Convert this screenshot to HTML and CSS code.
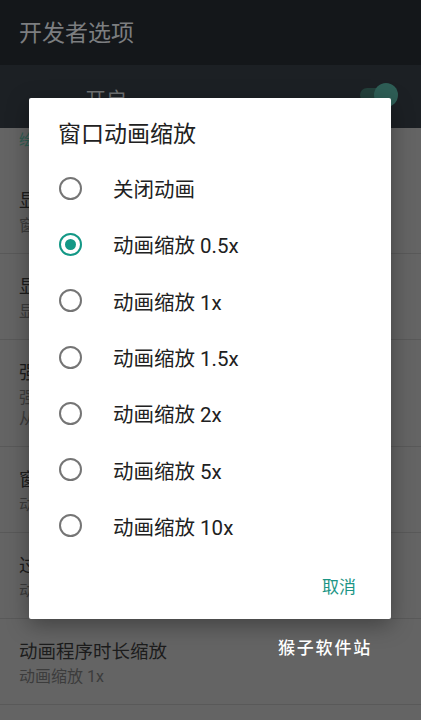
FILE: index.html
```html
<!DOCTYPE html>
<html lang="zh-CN">
<head>
  <meta charset="UTF-8" />
  <meta name="viewport" content="width=device-width, initial-scale=1.0" />
  <title>开发者选项</title>
  <link rel="stylesheet" href="styles.css">
</head>
<body>
  <div class="screen">
    <div class="appbar">开发者选项</div>
    <div class="switchbar">
      <span class="switch-label">开启</span>
      <span class="toggle"><span class="thumb"></span></span>
    </div>
    <div class="list">
      <div class="section">绘图</div>
      <div class="item">
        <div class="item-title">显示表面更新</div>
        <div class="item-sub">窗口中的所有表面更新时全部闪烁</div>
      </div>
      <div class="item">
        <div class="item-title">显示布局边界</div>
        <div class="item-sub">显示剪辑边界、边距等。</div>
      </div>
      <div class="item">
        <div class="item-title">强制使用从右到左的布局方向</div>
        <div class="item-sub">强制将所有语言区域的屏幕布局方向改为<br>从右到左</div>
      </div>
      <div class="item">
        <div class="item-title">窗口动画缩放</div>
        <div class="item-sub">动画缩放 0.5x</div>
      </div>
      <div class="item">
        <div class="item-title">过渡动画缩放</div>
        <div class="item-sub">动画缩放 1x</div>
      </div>
      <div class="item">
        <div class="item-title">动画程序时长缩放</div>
        <div class="item-sub">动画缩放 1x</div>
      </div>
    </div>

    <div class="dialog">
      <div class="dialog-title">窗口动画缩放</div>
      <div class="options">
        <div class="option"><span class="radio"></span>关闭动画</div>
        <div class="option"><span class="radio checked"></span>动画缩放 0.5x</div>
        <div class="option"><span class="radio"></span>动画缩放 1x</div>
        <div class="option"><span class="radio"></span>动画缩放 1.5x</div>
        <div class="option"><span class="radio"></span>动画缩放 2x</div>
        <div class="option"><span class="radio"></span>动画缩放 5x</div>
        <div class="option"><span class="radio"></span>动画缩放 10x</div>
      </div>
      <div class="actions"><span class="btn">取消</span></div>
    </div>

    <div class="watermark">猴子软件站</div>
  </div>
</body>
</html>
```

FILE: styles.css
```css
body {
  margin: 0;
  font-family: Roboto, "Noto Sans CJK SC", sans-serif;
  background: #646464;
}
.screen {
  position: relative;
  width: 421px;
  height: 720px;
  overflow: hidden;
  background: #646464;
}
.appbar {
  height: 62px;
  padding: 3px 0 0 19px;
  background: #14171a;
  color: #7c7e80;
  font-size: 23px;
  line-height: 62px;
}
.switchbar {
  height: 63px;
  background: #1c2024;
  display: flex;
  align-items: center;
  padding: 0 29px 0 85px;
  justify-content: space-between;
}
.switch-label {
  color: #6f7173;
  font-size: 21px;
  margin-top: 2px;
}
.toggle {
  position: relative;
  width: 32px;
  height: 14px;
  border-radius: 7px;
  background: #23403b;
  margin-top: -4px;
}
.thumb {
  position: absolute;
  right: -6px;
  top: -5px;
  width: 24px;
  height: 24px;
  border-radius: 50%;
  background: #2e5e56;
}
.section {
  color: #2f5d53;
  font-size: 15px;
  line-height: 20px;
  padding: 2px 19px 18px;
}
.item {
  padding: 21px 19px 17px;
  border-bottom: 1px solid #595959;
}
.item-title {
  color: #1c1c1c;
  font-size: 18.5px;
  line-height: 24px;
}
.item-sub {
  color: #3c3c3c;
  font-size: 16px;
  line-height: 21px;
  margin-top: 2px;
}
.dialog {
  position: absolute;
  left: 29px;
  top: 98px;
  width: 362px;
  height: 521px;
  background: #fff;
  border-radius: 2px;
  box-shadow: 0 6px 22px rgba(0,0,0,0.35);
}
.dialog-title {
  padding: 24px 0 0 29px;
  height: 38px;
  font-size: 23px;
  line-height: 26px;
  color: #212121;
}
.options {
  display: flex;
  flex-direction: column;
}
.option {
  height: 56.3px;
  display: flex;
  align-items: center;
  font-size: 20.5px;
  color: #212121;
}
.radio {
  box-sizing: border-box;
  width: 23px;
  height: 23px;
  margin: 0 31px 0 30px;
  border: 2px solid #757575;
  border-radius: 50%;
  display: flex;
  align-items: center;
  justify-content: center;
}
.radio.checked {
  border-color: #139886;
}
.radio.checked::after {
  content: "";
  width: 11px;
  height: 11px;
  border-radius: 50%;
  background: #139886;
}
.actions {
  display: flex;
  justify-content: flex-end;
  padding: 21px 35px 0 0;
}
.btn {
  color: #1b9585;
  font-size: 17px;
  line-height: 24px;
}
.watermark {
  position: absolute;
  left: 278px;
  top: 634px;
  color: #fff;
  font-size: 17px;
  font-weight: 500;
  letter-spacing: 1.8px;
}
```
